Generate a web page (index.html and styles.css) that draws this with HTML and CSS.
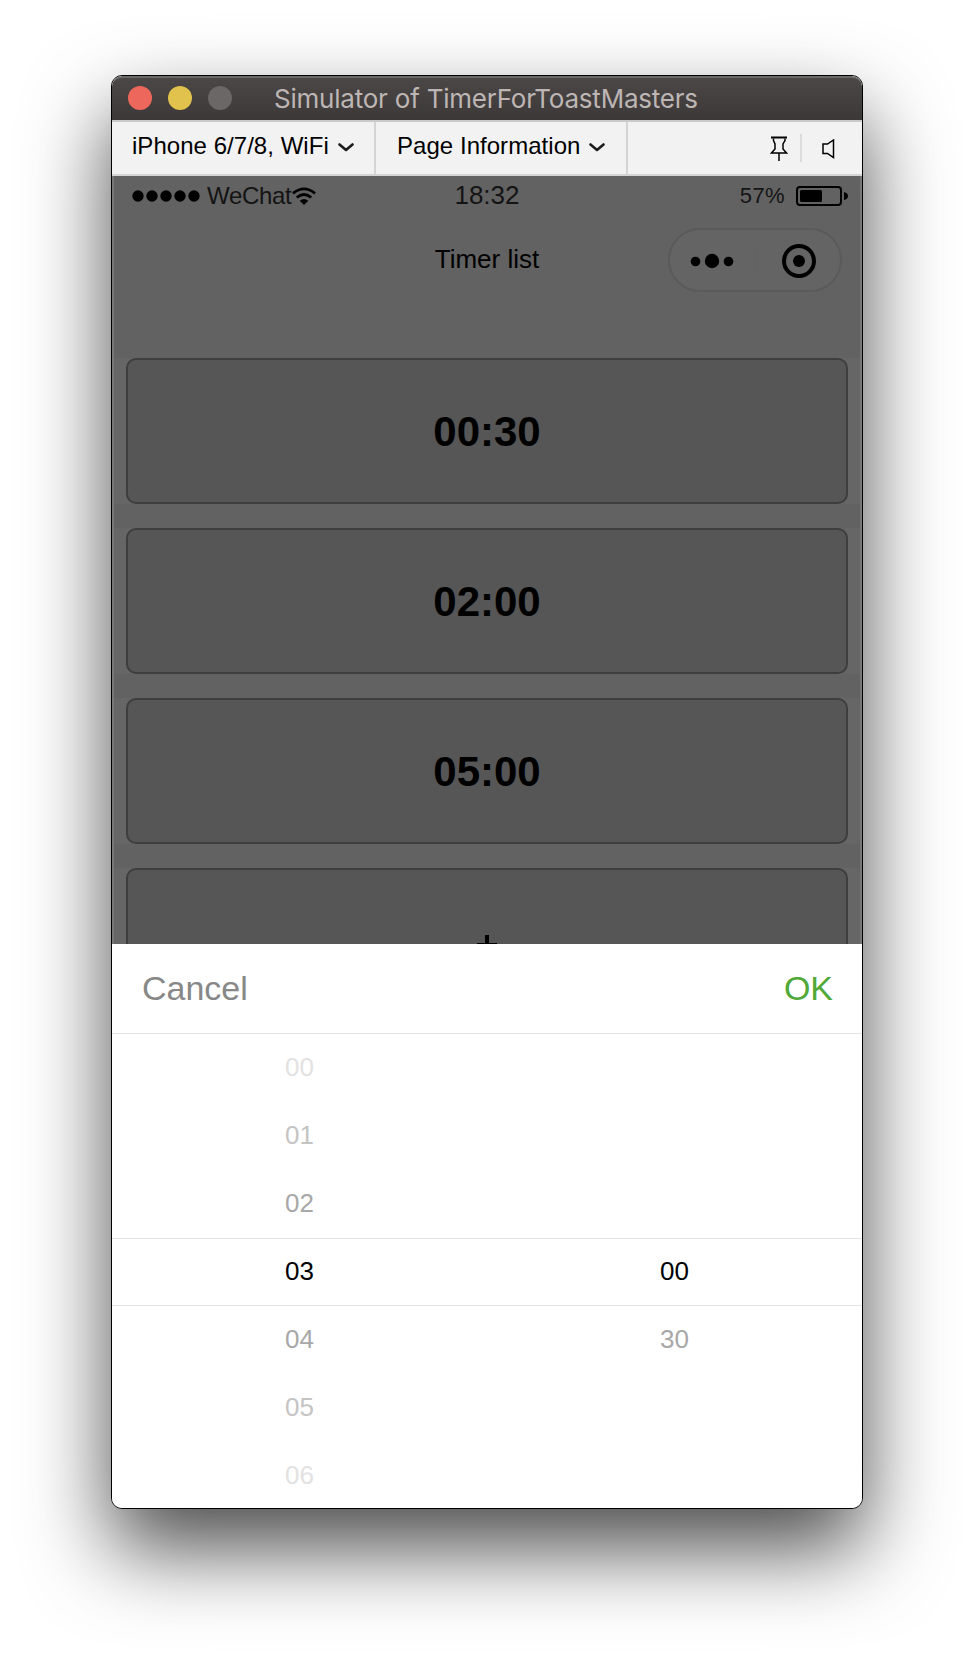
FILE: index.html
```html
<!DOCTYPE html>
<html lang="en">
<head>
<meta charset="utf-8">
<title>Simulator of TimerForToastMasters</title>
<link rel="stylesheet" href="styles.css">
</head>
<body>
<main class="window">
  <header class="titlebar">
    <div class="lights"><i class="light close"></i><i class="light minimize"></i><i class="light zoom"></i></div>
    <h1 class="title">Simulator of TimerForToastMasters</h1>
  </header>
  <nav class="toolbar">
    <div class="tool device"><span class="device-name">iPhone 6/7/8, WiFi</span>
      <svg class="chevron" width="16" height="9" viewBox="0 0 16 9"><path d="M1.500 1.500 8 7l6.500-5.500"/></svg></div>
    <div class="tool page"><span class="page-info">Page Information</span>
      <svg class="chevron" width="16" height="9" viewBox="0 0 16 9"><path d="M1.500 1.500 8 7l6.500-5.500"/></svg></div>
    <div class="actions">
      <svg class="pin" width="18" height="25" viewBox="0 0 18 25"><path d="M1 1.500h16" stroke-width="2"/><path d="M3.500 2.500v2L5 8v5l-3.500 4h15L13 13V8l2-3.500v-2M9 17v8"/></svg>
      <i class="divider"></i>
      <svg class="speaker" width="13" height="20" viewBox="0 0 13 20"><path d="M1 5h4.500l6-4v17.500l-6-4H1z"/></svg>
    </div>
  </nav>
  <section class="phone">
    <div class="status">
      <div class="carrier">
        <svg width="68" height="12" viewBox="0 0 68 12"><circle cx="6" cy="6" r="5.700"/><circle cx="20" cy="6" r="5.700"/><circle cx="34" cy="6" r="5.700"/><circle cx="48" cy="6" r="5.700"/><circle cx="62" cy="6" r="5.700"/></svg>
        <span class="carrier-name">WeChat</span>
        <svg class="wifi" width="24" height="19" viewBox="0 0 24 19"><path class="arc" d="M1 6.300Q12-2.500 23 6.300M4.800 10.500q7.200-6 14.400 0"/><path d="M7.700 13.700q4.300-3.500 8.600 0L12 18z"/></svg>
      </div>
      <span class="clock">18:32</span>
      <div class="power"><span class="percent">57%</span>
        <svg width="53" height="20" viewBox="0 0 53 20"><rect x="1" y="1" width="44" height="18" rx="3" fill="none" stroke="#000" stroke-width="2"/><rect x="4" y="4" width="22" height="12" rx="1.500"/><path d="M48 6q4 1 4 4t-4 4z"/></svg>
      </div>
    </div>
    <div class="navigation">
      <h2 class="page-title">Timer list</h2>
      <div class="capsule">
        <svg width="170" height="60" viewBox="0 0 170 60"><circle cx="25.500" cy="31.500" r="4.800"/><circle cx="42" cy="31" r="7.200"/><circle cx="58.500" cy="31.500" r="4.800"/><circle cx="129" cy="31" r="15" fill="none" stroke="#000" stroke-width="4"/><circle cx="129" cy="31" r="6"/><path d="M86.500 12v36" stroke="#626262"/></svg>
      </div>
    </div>
    <div class="timers">
      <div class="row"><div class="timer">00:30</div></div>
      <div class="row"><div class="timer">02:00</div></div>
      <div class="row"><div class="timer">05:00</div></div>
      <div class="row"><div class="timer add"><svg width="22" height="22" viewBox="0 0 22 22"><path d="M11 0v22M1 10h20" stroke="#000" stroke-width="4"/></svg></div></div>
    </div>
  </section>
  <section class="sheet">
    <div class="sheet-header"><span class="cancel">Cancel</span><span class="ok">OK</span></div>
    <div class="picker">
      <div class="step far"><span>00</span></div>
      <div class="step mid"><span>01</span></div>
      <div class="step near"><span>02</span></div>
      <div class="step selected"><span>03</span><span>00</span></div>
      <div class="step near"><span>04</span><span>30</span></div>
      <div class="step mid"><span>05</span></div>
      <div class="step far"><span>06</span></div>
    </div>
  </section>
</main>
</body>
</html>
```
FILE: styles.css
```css
* { box-sizing: border-box; }
body { margin: 0; padding-top: 75px; height: 1656px; overflow: hidden; background: #fff; font-family: "Liberation Sans", Arial, sans-serif; color: #000; }
svg { display: block; flex: none; }
.window { width: 752px; height: 1434px; margin-left: 111px; border: 1px solid #000; border-radius: 11px; overflow: hidden; background: #fff; box-shadow: 0 40px 84px rgba(0, 0, 0, .7); }
.titlebar { height: 44px; display: grid; grid-template-columns: 162px 1fr; align-items: center; background: linear-gradient(#4b4746, #3c3837); border-top: 2px solid #6b6867; border-radius: 10px 10px 0 0; }
.lights { display: flex; gap: 16px; padding: 0 0 2px 16px; }
.light { width: 24px; height: 24px; border-radius: 50%; }
.close { background: #ee675c; }
.minimize { background: #e0c24c; }
.zoom { background: #6a6766; }
.title { margin: 0; font: 400 26px/42px Inter, sans-serif; letter-spacing: -.22px; color: #bdb6b4; white-space: nowrap; }
.toolbar { height: 56px; display: flex; background: #f2f2f2; border-top: 2px solid #cbc8c8; border-bottom: 2px solid #d4d4d4; font-size: 24px; line-height: 48px; white-space: nowrap; }
.tool { display: flex; gap: 9px; border-right: 2px solid #d4d4d4; }
.device { width: 264px; padding-left: 20px; }
.page { width: 252px; padding-left: 21px; }
.tool span { letter-spacing: .04px; }
.chevron { margin-top: 21px; fill: none; stroke: #1c1c1c; stroke-width: 2.600; stroke-linecap: round; stroke-linejoin: round; }
.actions { display: flex; padding: 12px 0 0 142px; }
.actions svg { fill: none; stroke: #000; stroke-width: 1.500; }
.pin { margin-top: 2px; }
.divider { width: 2px; height: 28px; margin-left: 12px; background: #dcdcdc; }
.speaker { margin: 5px 0 0 20px; }
.phone { height: 768px; overflow: hidden; border: solid #777; border-width: 0 2px; background: #626262; }
.status { height: 40px; display: grid; grid-template-columns: 1fr 80px 1fr; align-items: center; color: #141414; font-size: 24px; }
.carrier { display: flex; align-items: center; padding-left: 18px; gap: 7px; }
.carrier-name { letter-spacing: -.3px; }
.wifi { margin: 1px 0 0 -6px; }
.arc { fill: none; stroke: #000; stroke-width: 2.800; }
.clock { padding-bottom: 2px; font-size: 26px; text-align: center; }
.power { display: flex; align-items: center; justify-content: flex-end; gap: 11px; padding-right: 11px; }
.percent { font-size: 22px; letter-spacing: .4px; }
.navigation { height: 142px; padding-top: 12px; display: grid; grid-template-columns: 1fr 200px 1fr; align-items: start; }
.page-title { grid-column: 2; margin: 0; text-align: center; font-size: 26px; font-weight: 400; line-height: 62px; }
.capsule { width: 174px; height: 64px; justify-self: end; margin-right: 18px; border: 2px solid #5a5a5a; border-radius: 32px; background: #646464; }
.timers { display: flex; flex-direction: column; gap: 24px; }
.row { height: 146px; padding: 0 12px; background: #666; }
.timer { height: 146px; display: flex; justify-content: center; align-items: center; border: 2px solid #3e3e3e; border-radius: 10px; background: #565656; font-size: 42px; font-weight: 700; line-height: 1; padding-top: 1px; }
.add { padding-top: 9px; }
.sheet { height: 564px; background: #fff; }
.sheet-header { height: 90px; display: flex; justify-content: space-between; align-items: center; padding: 0 29px 0 30px; border-bottom: 1px solid #e3e3e3; font-size: 34px; }
.cancel { color: #888; }
.ok { color: #50a936; }
.picker { height: 474px; display: flex; flex-direction: column; justify-content: center; }
.step { height: 68px; flex: none; display: grid; grid-template-columns: 1fr 1fr; align-items: center; text-align: center; font-size: 26px; }
.selected { height: 68px; margin: 1px 0 -1px; padding-bottom: 2px; border: solid #e3e3e3; border-width: 1px 0; }
.near { color: #a8a8a8; }
.mid { color: #c4c4c4; }
.far { color: #e2e2e2; }
```
